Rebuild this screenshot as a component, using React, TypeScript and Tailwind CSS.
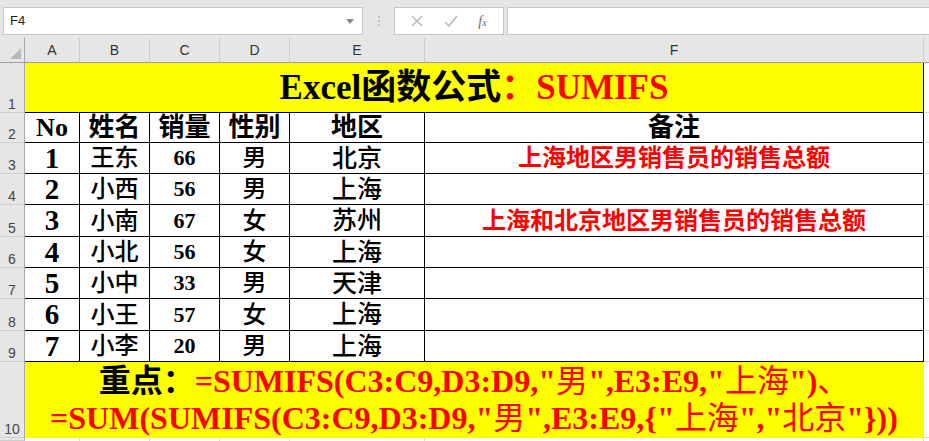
import React from 'react';

const serif = "font-['Liberation_Serif','Noto_Sans_CJK_SC',serif]";

const rows = [
  { no: '1', name: '王东', qty: '66', sex: '男', area: '北京', note: '上海地区男销售员的销售总额' },
  { no: '2', name: '小西', qty: '56', sex: '男', area: '上海', note: '' },
  { no: '3', name: '小南', qty: '67', sex: '女', area: '苏州', note: '上海和北京地区男销售员的销售总额' },
  { no: '4', name: '小北', qty: '56', sex: '女', area: '上海', note: '' },
  { no: '5', name: '小中', qty: '33', sex: '男', area: '天津', note: '' },
  { no: '6', name: '小王', qty: '57', sex: '女', area: '上海', note: '' },
  { no: '7', name: '小李', qty: '20', sex: '男', area: '上海', note: '' },
];

function RowHead({ n }: { n: string }) {
  return (
    <div className="bg-[#e6e6e6] border-r border-b border-r-[#a8a8a8] border-b-[#cfcfcf] flex items-end justify-center pb-[1px] text-[14px] leading-none text-[#444] font-['Liberation_Sans',sans-serif]">
      {n}
    </div>
  );
}

function ColHead({ label }: { label: string }) {
  return (
    <div className="bg-[#e6e6e6] border-r border-b border-r-[#cdcdcd] border-b-[#9f9f9f] flex items-center justify-center text-[14px] text-[#333] font-['Liberation_Sans',sans-serif]">
      {label}
    </div>
  );
}

function Td({ children, className = '' }: { children?: React.ReactNode; className?: string }) {
  return (
    <div className={`border-r border-b border-black bg-white flex items-center justify-center whitespace-nowrap overflow-hidden ${serif} ${className}`}>
      {children}
    </div>
  );
}

function GCell() {
  return <div className="bg-white border-b border-[#d9d9d9]" />;
}

// CJK inside the formulas is drawn at regular weight, like the sheet
function Cn({ children }: { children: React.ReactNode }) {
  return <span className="font-normal">{children}</span>;
}

export default function App() {
  return (
    <div className="w-[929px] h-[441px] overflow-hidden bg-white flex flex-col">
      {/* formula bar */}
      <div className="h-[38px] shrink-0 bg-[#e6e6e6] flex items-start pt-[7px] pl-[3px]">
        <div className="w-[360px] h-[28px] bg-white border border-[#c6c6c6] flex items-center justify-between pl-[6px] pr-[8px]">
          <span className="text-[13px] text-[#222] font-['Liberation_Sans',sans-serif]">F4</span>
          <svg width="8" height="5" viewBox="0 0 8 5"><path d="M0 0h8L4 5z" fill="#8a8a8a" /></svg>
        </div>
        <div className="w-[31px] h-[28px] flex flex-col items-center justify-center gap-[2px]">
          <span className="w-[2px] h-[2px] bg-[#c4c4c4]" />
          <span className="w-[2px] h-[2px] bg-[#c4c4c4]" />
          <span className="w-[2px] h-[2px] bg-[#c4c4c4]" />
        </div>
        <div className="w-[110px] h-[28px] bg-white border border-[#c6c6c6] flex items-center justify-around px-[6px]">
          <svg width="12" height="12" viewBox="0 0 12 12"><path d="M1 1l10 10M11 1L1 11" stroke="#b4b4b4" strokeWidth="1.3" /></svg>
          <svg width="14" height="12" viewBox="0 0 14 12"><path d="M1 7l4 4 8-10" stroke="#b4b4b4" strokeWidth="1.4" fill="none" /></svg>
          <span className="text-[14px] italic text-[#6a6a6a] font-['Liberation_Serif',serif]">f<span className="text-[10px]">x</span></span>
        </div>
        <div className="ml-[3px] flex-1 h-[28px] bg-white border border-r-0 border-[#c6c6c6]" />
      </div>

      {/* sheet */}
      <div className="flex-1 grid grid-cols-[25px_55px_70px_70px_70px_135px_499px_1fr] grid-rows-[25px_50px_30px_31px_31px_32px_31px_31px_32px_31px_76px_1fr]">
        {/* column headers */}
        <div className="bg-[#e6e6e6] border-r border-b border-r-[#a8a8a8] border-b-[#9f9f9f] relative">
          <svg className="absolute right-[3px] bottom-[3px]" width="11" height="11" viewBox="0 0 11 11"><path d="M11 0v11H0z" fill="#b9b9b9" /></svg>
        </div>
        {['A', 'B', 'C', 'D', 'E', 'F'].map((c) => <ColHead key={c} label={c} />)}
        <div className="bg-[#e6e6e6] border-b border-b-[#9f9f9f]" />

        {/* row 1 */}
        <RowHead n="1" />
        <div className={`col-span-6 bg-[#ffff00] border-r border-b border-black flex items-center justify-center font-bold text-[35px] leading-none text-black ${serif}`}>
          <span>Excel函数公式</span>
          <span className="text-[#ff0000]">：SUMIFS</span>
        </div>
        <GCell />

        {/* row 2 */}
        <RowHead n="2" />
        {['No', '姓名', '销量', '性别', '地区', '备注'].map((h) => (
          <Td key={h} className="text-[26px] font-bold leading-none text-black">{h}</Td>
        ))}
        <GCell />

        {/* data rows */}
        {rows.map((r, i) => (
          <React.Fragment key={r.no}>
            <RowHead n={String(i + 3)} />
            <Td className="text-[29px] font-bold leading-none">{r.no}</Td>
            <Td className="text-[24px] font-medium leading-none">{r.name}</Td>
            <Td className="text-[22px] font-bold leading-none">{r.qty}</Td>
            <Td className="text-[24px] font-medium leading-none">{r.sex}</Td>
            <Td className="text-[25px] font-medium leading-none">{r.area}</Td>
            <Td className="text-[24px] font-bold leading-none text-[#ff0000]">{r.note}</Td>
            <GCell />
          </React.Fragment>
        ))}

        {/* row 10 */}
        <RowHead n="10" />
        <div className={`col-span-6 bg-[#ffff00] border-r border-b border-[#ffff00] flex flex-col items-center justify-center font-bold text-[32px] leading-[37px] whitespace-nowrap ${serif}`}>
          <div>
            <span className="text-black">重点：</span>
            <span className="text-[#ff0000]">=SUMIFS(C3:C9,D3:D9,"<Cn>男</Cn>",E3:E9,"<Cn>上海</Cn>")<Cn>、</Cn></span>
          </div>
          <div className="text-[#ff0000]">
            =SUM(SUMIFS(C3:C9,D3:D9,"<Cn>男</Cn>",E3:E9,{'{'}"<Cn>上海</Cn>","<Cn>北京</Cn>"{'}'}))
          </div>
        </div>
        <GCell />

        {/* row 11 */}
        <RowHead n="" />
        {[0, 1, 2, 3, 4, 5].map((k) => (
          <div key={k} className="bg-white border-r border-[#d9d9d9]" />
        ))}
        <div className="bg-white" />
      </div>
    </div>
  );
}
